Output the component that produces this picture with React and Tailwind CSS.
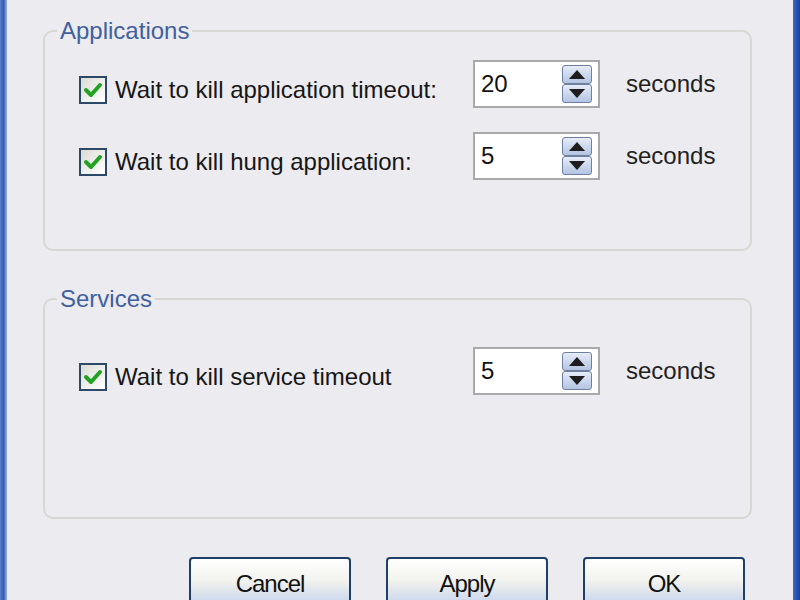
import { useState } from "react";

const font = { fontFamily: '"Liberation Sans", Arial, sans-serif' };

const Check = ({ checked, onToggle }) => (
  <button
    type="button"
    onClick={onToggle}
    className="w-[28px] h-[28px] border-2 border-[#2c4a68] bg-gradient-to-br from-[#dcdcd6] to-[#ffffff] flex items-center justify-center shrink-0"
  >
    {checked && (
      <svg width="20" height="18" viewBox="0 0 20 18">
        <path d="M3 9 L8 14 L17 4" fill="none" stroke="#23a323" strokeWidth="4" strokeLinecap="round" strokeLinejoin="round" />
      </svg>
    )}
  </button>
);

const Spin = ({ value }) => (
  <div className="w-[127px] h-[48px] border-2 border-[#a9a9a9] bg-white flex items-center justify-between pl-[6px] pr-[6px]">
    <span className="text-[24px] text-[#111]">{value}</span>
    <div className="flex flex-col w-[30px]">
      {["up", "down"].map((d) => (
        <div
          key={d}
          className="h-[19px] border border-[#6f7f9f] rounded-[3px] bg-gradient-to-b from-[#e6edf9] to-[#b4c4e2] flex items-center justify-center"
        >
          <svg width="16" height="9" viewBox="0 0 16 9">
            {d === "up" ? <path d="M8 0 L16 9 L0 9 Z" fill="#1d1d1d" /> : <path d="M0 0 L16 0 L8 9 Z" fill="#1d1d1d" />}
          </svg>
        </div>
      ))}
    </div>
  </div>
);

const Row = ({ label, value }) => {
  const [on, setOn] = useState(true);
  return (
    <div className="flex items-center h-[48px]">
      <div className="w-[394px] flex items-center gap-[8px] pt-[11px]">
        <Check checked={on} onToggle={() => setOn(!on)} />
        <span className="text-[24px] text-[#161616] leading-none">{label}</span>
      </div>
      <Spin value={value} />
      <span className="ml-[26px] text-[24px] text-[#222] leading-none">seconds</span>
    </div>
  );
};

const Group = ({ title, children, pad }) => (
  <fieldset className={`border-2 border-[#d8d7d3] rounded-[10px] pl-[34px] h-[233px] ${pad}`}>
    <legend className="-ml-[22px] px-[3px] text-[24px] leading-[26px] text-[#40609f]">{title}</legend>
    {children}
  </fieldset>
);

const Btn = ({ children }) => (
  <button
    type="button"
    className="w-[162px] h-[48px] border-2 border-[#1f3f6a] rounded-[4px] bg-gradient-to-b from-[#ffffff] via-[#f2f2ee] to-[#c9d6ec] text-[24px] text-[#111] pt-[6px] tracking-[-1px]"
  >
    {children}
  </button>
);

export default function App() {
  return (
    <div className="w-[800px] h-[600px] flex overflow-hidden" style={font}>
      <div className="w-[7px] h-full bg-gradient-to-r from-[#5b7fc4] via-[#2f5cb8] to-[#9db5e6]" />
      <div className="flex-1 bg-[#ecebef] pt-[18px] pl-[36px] pr-[41px]">
        <Group title="Applications" pad="pt-[16px]">
          <div className="flex flex-col gap-[24px]">
            <Row label="Wait to kill application timeout:" value="20" />
            <Row label="Wait to kill hung application:" value="5" />
          </div>
        </Group>
        <div className="h-[35px]" />
        <Group title="Services" pad="pt-[35px]">
          <Row label="Wait to kill service timeout" value="5" />
        </Group>
        <div className="flex justify-end gap-[35px] mt-[38px] pr-[7px]">
          <Btn>Cancel</Btn>
          <Btn>Apply</Btn>
          <Btn>OK</Btn>
        </div>
      </div>
      <div className="w-[7px] h-full bg-gradient-to-r from-[#3e6bc6] via-[#2552b3] to-[#1d3f94]" />
    </div>
  );
}
